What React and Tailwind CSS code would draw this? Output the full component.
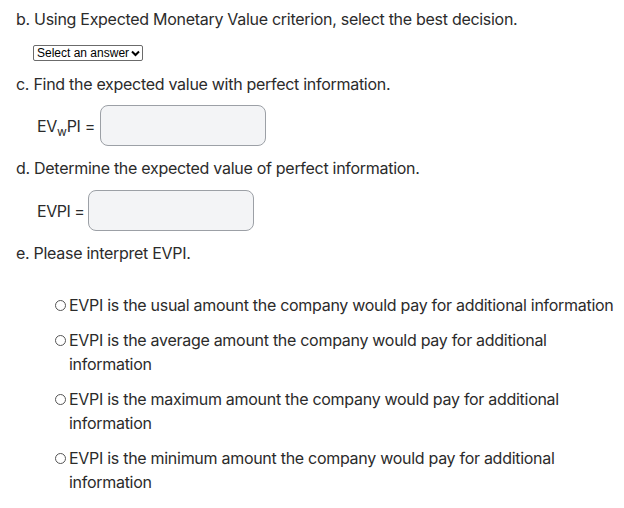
import React from 'react';

const options = [
  'EVPI is the usual amount the company would pay for additional information',
  'EVPI is the average amount the company would pay for additional information',
  'EVPI is the maximum amount the company would pay for additional information',
  'EVPI is the minimum amount the company would pay for additional information',
];

const Box = () => (
  <div className="w-[166px] h-[41px] rounded-[8px] border border-[#9ca0a6] bg-[#f3f4f6]" />
);

export default function App() {
  return (
    <div className="w-[624px] h-[508px] bg-white text-[#2b2b2b] text-[16px] leading-[24px] tracking-[-0.018em] pt-[7px] pl-[16px]" style={{ fontFamily: 'Inter, "Noto Sans", sans-serif' }}>
      <p>b. Using Expected Monetary Value criterion, select the best decision.</p>

      <div className="pl-[17px] mt-[8px] h-[16px]">
        <div className="inline-flex items-center h-[16px] w-[110px] border border-[#6b6b6b] rounded-[2px] px-[3px] text-[12px] leading-[14px] tracking-normal text-black" style={{ fontFamily: '"Liberation Sans", Arial, sans-serif' }}>
          <span className="flex-1">Select an answer</span>
          <svg width="9" height="7" viewBox="0 0 9 7" className="mr-[-1px]">
            <path d="M1 1.5 L4.5 5 L8 1.5" fill="none" stroke="#000" strokeWidth="2" />
          </svg>
        </div>
      </div>

      <p className="mt-[17px]">c. Find the expected value with perfect information.</p>

      <div className="flex items-center pl-[21px] mt-[9px] h-[41px]">
        <span className="mr-[5px]">
          EV<span className="inline-block text-[12px] leading-none relative top-[4px]">w</span>PI =
        </span>
        <Box />
      </div>

      <p className="mt-[10px]">d. Determine the expected value of perfect information.</p>

      <div className="flex items-center pl-[21px] mt-[10px] h-[41px]">
        <span className="mr-[4px] tracking-[-0.03em]">EVPI =</span>
        <Box />
      </div>

      <p className="mt-[10px]">e. Please interpret EVPI.</p>

      <div className="pl-[39px] mt-[28px] flex flex-col gap-[11px] w-[607px]">
        {options.map((o) => (
          <div key={o} className="flex items-start">
            <span className="mt-[7px] mr-[3px] w-[11px] h-[11px] shrink-0 rounded-full border border-[#555]" />
            <span>{o}</span>
          </div>
        ))}
      </div>
    </div>
  );
}
